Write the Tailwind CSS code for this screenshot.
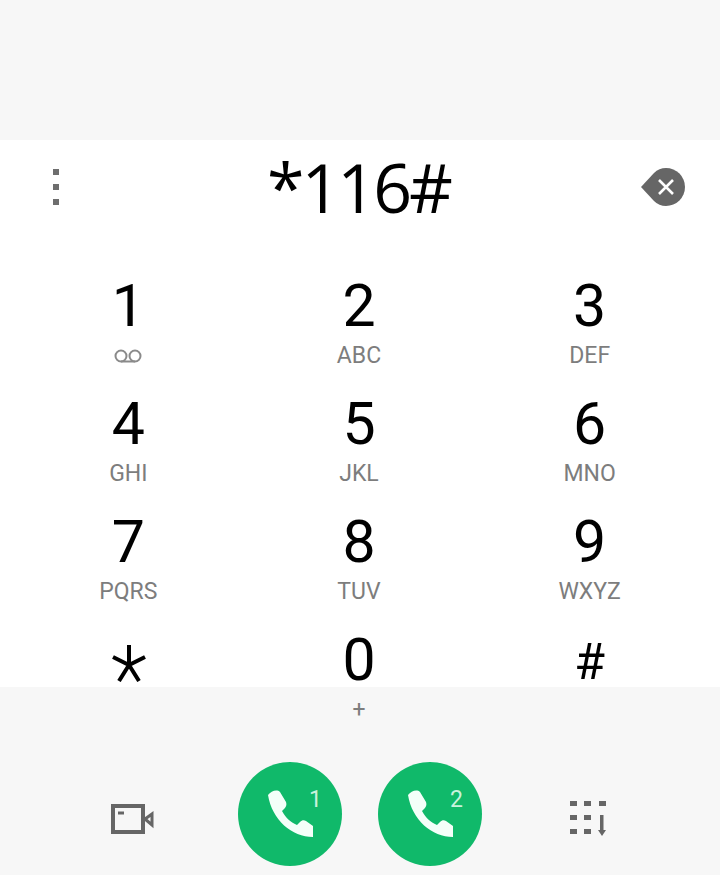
<!DOCTYPE html>
<html lang="en">
<head>
  <meta charset="UTF-8" />
  <title>Dialer</title>
  <script src="https://cdn.jsdelivr.net/npm/@tailwindcss/browser@4"></script>
</head>
<body class="bg-[#f7f7f7] font-['Roboto',sans-serif]">
  <div class="w-[720px] h-[875px] overflow-hidden flex flex-col">
    <div class="h-[140px] shrink-0"></div>

    <!-- number + keypad -->
    <section class="h-[547px] shrink-0 bg-white">
      <div class="h-[94px] flex items-center justify-between pl-[51px] pr-[34px]">
        <div class="flex flex-col gap-[9px] w-[10px] items-center">
          <span class="w-[6px] h-[6px] bg-[#6e6e6e]"></span>
          <span class="w-[6px] h-[6px] bg-[#6e6e6e]"></span>
          <span class="w-[6px] h-[6px] bg-[#6e6e6e]"></span>
        </div>
        <div class="ml-[16px] text-[68px] leading-none text-black font-['Open_Sans',sans-serif] tracking-[-3px]">*116#</div>
        <svg class="w-[46px] h-[38px]" viewBox="0 0 46 38">
          <path d="M1 19 L14 5 Q19 0 26 0 A19 19 0 0 1 26 38 Q19 38 14 33 Z" fill="#666666"/>
          <path d="M19 12 L33 26 M33 12 L19 26" stroke="#ffffff" stroke-width="2.6" fill="none"/>
        </svg>
      </div>

      <div class="grid grid-cols-3 pl-[13px] pr-[15px] mt-[37px] auto-rows-[118px] text-center">
        <div class="flex flex-col items-center">
          <span class="text-[59px] leading-[70px] text-black">1</span>
          <svg class="w-[30px] h-[14px] mt-[8px]" viewBox="0 0 30 14" fill="none" stroke="#8a8a8a" stroke-width="2">
            <circle cx="8" cy="7" r="5.5"/><circle cx="22" cy="7" r="5.5"/><path d="M8 12.5h14"/>
          </svg>
        </div>
        <div class="flex flex-col items-center">
          <span class="text-[59px] leading-[70px] text-black">2</span>
          <span class="text-[23px] leading-[30px] text-[#7d7d7d]">ABC</span>
        </div>
        <div class="flex flex-col items-center">
          <span class="text-[59px] leading-[70px] text-black">3</span>
          <span class="text-[23px] leading-[30px] text-[#7d7d7d]">DEF</span>
        </div>
        <div class="flex flex-col items-center">
          <span class="text-[59px] leading-[70px] text-black">4</span>
          <span class="text-[23px] leading-[30px] text-[#7d7d7d]">GHI</span>
        </div>
        <div class="flex flex-col items-center">
          <span class="text-[59px] leading-[70px] text-black">5</span>
          <span class="text-[23px] leading-[30px] text-[#7d7d7d]">JKL</span>
        </div>
        <div class="flex flex-col items-center">
          <span class="text-[59px] leading-[70px] text-black">6</span>
          <span class="text-[23px] leading-[30px] text-[#7d7d7d]">MNO</span>
        </div>
        <div class="flex flex-col items-center">
          <span class="text-[59px] leading-[70px] text-black">7</span>
          <span class="text-[23px] leading-[30px] text-[#7d7d7d]">PQRS</span>
        </div>
        <div class="flex flex-col items-center">
          <span class="text-[59px] leading-[70px] text-black">8</span>
          <span class="text-[23px] leading-[30px] text-[#7d7d7d]">TUV</span>
        </div>
        <div class="flex flex-col items-center">
          <span class="text-[59px] leading-[70px] text-black">9</span>
          <span class="text-[23px] leading-[30px] text-[#7d7d7d]">WXYZ</span>
        </div>
        <div class="flex flex-col items-center">
          <svg class="w-[34px] h-[37px] mt-[20px] ml-[2px]" viewBox="0 0 34 37" fill="none" stroke="#000" stroke-width="4">
            <path d="M17 0v20M1 12l16 8 16-8M7 36l10-16 10 16"/>
          </svg>
        </div>
        <div class="flex flex-col items-center">
          <span class="text-[59px] leading-[70px] text-black">0</span>
          <span class="text-[23px] leading-[30px] text-[#7d7d7d]">+</span>
        </div>
        <div class="flex flex-col items-center">
          <span class="text-[50px] leading-[74px] text-black">#</span>
        </div>
      </div>
    </section>

    <!-- bottom actions -->
    <div class="flex-1 relative flex items-center pt-[66px] pl-[110px]">
      <svg class="w-[44px] h-[30px] mr-[84px] mt-[9px]" viewBox="0 0 44 30" fill="none">
        <rect x="3" y="2" width="30" height="26" stroke="#666" stroke-width="4"/>
        <path d="M8 9h6" stroke="#666" stroke-width="3"/>
        <path d="M35 15l7-5v11z" stroke="#666" stroke-width="3"/>
      </svg>

      <div class="w-[104px] h-[104px] rounded-full bg-[#10b96a] flex items-center justify-center relative mr-[36px]">
        <svg class="w-[48px] h-[48px]" viewBox="0 0 48 48"><path fill="#f4fff9" d="M2 5 C5 1 11 -1 14 2 L20 12 C21 15 20 17 18 19 L16 21 C20 28 24 32 31 35 L34 32 C36 30 38 30 40 31 L47 36 L47 47 C26 47 6 30 2 5Z"/></svg>
        <span class="absolute top-[26px] right-[20px] text-[23px] leading-none text-[#c9f2dd]">1</span>
      </div>
      <div class="w-[104px] h-[104px] rounded-full bg-[#10b96a] flex items-center justify-center relative mr-[88px]">
        <svg class="w-[48px] h-[48px]" viewBox="0 0 48 48"><path fill="#f4fff9" d="M2 5 C5 1 11 -1 14 2 L20 12 C21 15 20 17 18 19 L16 21 C20 28 24 32 31 35 L34 32 C36 30 38 30 40 31 L47 36 L47 47 C26 47 6 30 2 5Z"/></svg>
        <span class="absolute top-[26px] right-[19px] text-[23px] leading-none text-[#c9f2dd]">2</span>
      </div>

      <svg class="w-[36px] h-[36px] mt-[10px]" viewBox="0 0 36 36" fill="#666">
        <rect x="0" y="0" width="7" height="5"/><rect x="14" y="0" width="7" height="5"/><rect x="29" y="0" width="7" height="5"/>
        <rect x="0" y="14" width="7" height="5"/><rect x="14" y="14" width="7" height="5"/>
        <rect x="0" y="28" width="7" height="5"/><rect x="14" y="28" width="7" height="5"/>
        <path d="M30 14h3.5v15h2.5l-4 6-4-6h2z"/>
      </svg>
    </div>
  </div>
</body>
</html>
